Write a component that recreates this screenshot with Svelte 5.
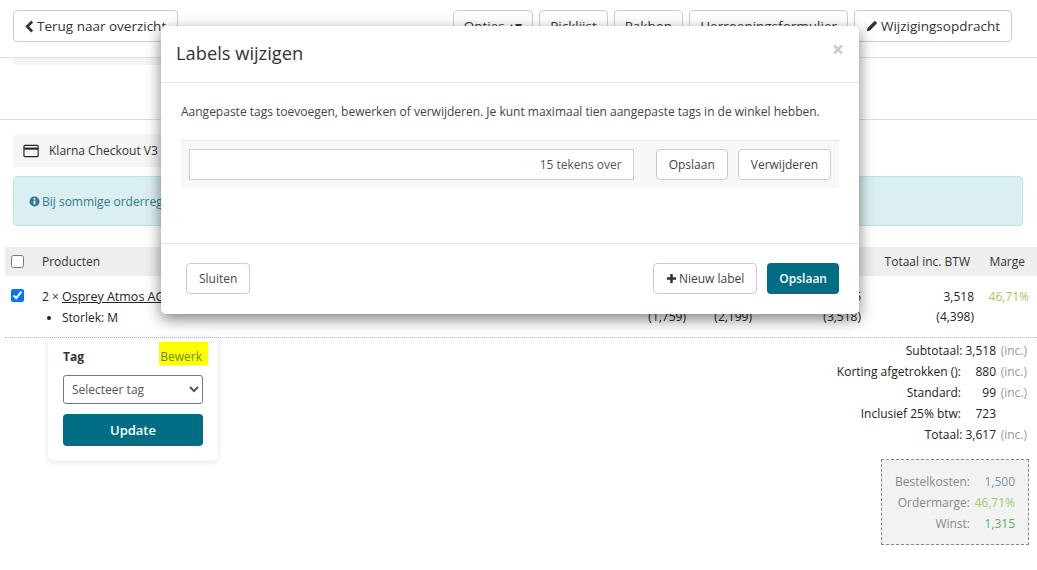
<script>
  const topButtons = ['Opties ▴▾', 'Picklijst', 'Pakbon', 'Herroepingsformulier'];
  const totals = [
    { label: 'Subtotaal:', value: '3,518', inc: true, tight: true },
    { label: 'Korting afgetrokken ():', value: '880', inc: true },
    { label: 'Standard:', value: '99', inc: true },
    { label: 'Inclusief 25% btw:', value: '723', inc: false },
    { label: 'Totaal:', value: '3,617', inc: true, tight: true }
  ];
</script>

<div class="page">
  <header class="topbar">
    <button class="btn">
      <svg class="chev" viewBox="0 0 10 14" width="9" height="13"><path d="M8 1.5 2.5 7 8 12.5" fill="none" stroke="currentColor" stroke-width="3"/></svg>
      Terug naar overzicht
    </button>
    <div class="top-actions">
      {#each topButtons as label}
        <button class="btn plain">{label}</button>
      {/each}
      <button class="btn">
        <svg viewBox="0 0 14 14" width="12" height="12"><path d="M1 13l.8-3.6L9.6 1.6a1 1 0 0 1 1.4 0l1.4 1.4a1 1 0 0 1 0 1.4L4.6 12.2z" fill="#333"/></svg>
        Wijzigingsopdracht
      </button>
    </div>
  </header>

  <div class="strip-wrap"><div class="strip"></div></div>

  <section class="payment-section">
    <div class="payment">
      <svg viewBox="0 0 18 14" width="17" height="14"><rect x="1" y="1" width="15" height="12" rx="1" fill="none" stroke="#222" stroke-width="1.2"/><rect x="1" y="3.4" width="15" height="2.2" fill="#222"/></svg>
      <span>Klarna Checkout V3</span>
    </div>
    <div class="alert">
      <svg viewBox="0 0 12 12" width="11" height="11"><circle cx="6" cy="6" r="5.5" fill="#2f7a8c"/><rect x="5" y="5" width="2" height="4.2" fill="#dbeff2"/><rect x="5" y="2.4" width="2" height="1.7" fill="#dbeff2"/></svg>
      Bij sommige orderregels is iets gewijzigd
    </div>
  </section>

  <div class="table">
    <div class="row head">
      <input type="checkbox" />
      <span class="product">Producten</span>
      <span></span><span></span><span></span>
      <span class="num">Totaal inc. BTW</span>
      <span class="num">Marge</span>
    </div>
    <div class="row item">
      <input type="checkbox" checked />
      <div class="product">
        <div>2 × <a href="#top">Osprey Atmos AG 65</a></div>
        <ul><li>Storlek: M</li></ul>
      </div>
      <div class="num">1,407<br />(1,759)</div>
      <div class="num">1,759<br />(2,199)</div>
      <div class="num">2,815<br />(3,518)</div>
      <div class="num">3,518<br />(4,398)</div>
      <div class="num margin">46,71%</div>
    </div>
  </div>

  <div class="lower">
    <aside class="tag-card">
      <div class="tag-head">
        <strong>Tag</strong>
        <mark>Bewerk</mark>
      </div>
      <select class="tag-select">
        <option>Selecteer tag</option>
      </select>
      <button class="btn-primary update">Update</button>
    </aside>

    <div class="summary">
      <div class="totals">
        {#each totals as t}
          <div class="total-row">
            {#if t.tight}
              <span class="total-label">{t.label} {t.value}</span>
            {:else}
              <span class="total-label">{t.label}</span>
              <span class="total-value">{t.value}</span>
            {/if}
            <span class="inc">{t.inc ? '(inc.)' : ''}</span>
          </div>
        {/each}
      </div>
      <div class="profit">
        <div class="profit-row"><span>Bestelkosten:</span><b class="blue">1,500</b></div>
        <div class="profit-row"><span>Ordermarge:</span><b class="lime">46,71%</b></div>
        <div class="profit-row"><span>Winst:</span><b class="green">1,315</b></div>
      </div>
    </div>
  </div>

  <div class="modal">
    <div class="modal-head">
      <h2>Labels wijzigen</h2>
      <span class="close">×</span>
    </div>
    <div class="modal-body">
      <p>Aangepaste tags toevoegen, bewerken of verwijderen. Je kunt maximaal tien aangepaste tags in de winkel hebben.</p>
      <div class="label-row">
        <div class="label-input">15 tekens over</div>
        <button class="btn">Opslaan</button>
        <button class="btn">Verwijderen</button>
      </div>
    </div>
    <div class="modal-foot">
      <button class="btn">Sluiten</button>
      <div class="foot-right">
        <button class="btn new-label">
          <svg viewBox="0 0 12 12" width="11" height="11"><path d="M6 1v10M1 6h10" stroke="#333" stroke-width="2.8"/></svg>
          Nieuw label
        </button>
        <button class="btn-primary">Opslaan</button>
      </div>
    </div>
  </div>
</div>

<style>
  :global(body) {
    margin: 0;
    background: #fff;
  }

  .page {
    position: relative;
    width: 1037px;
    height: 570px;
    overflow: hidden;
    font-family: 'Open Sans', sans-serif;
    font-size: 12px;
    color: #333;
  }

  button {
    font-family: inherit;
  }

  .btn {
    display: inline-flex;
    align-items: center;
    justify-content: center;
    gap: 3px;
    height: 32px;
    padding: 0 11px;
    background: #fff;
    border: 1px solid #ccc;
    border-radius: 4px;
    font-size: 13.5px;
    color: #333;
    white-space: nowrap;
  }

  .btn.plain {
    padding: 0 10px;
  }

  .btn-primary {
    height: 31px;
    padding: 0 12px;
    background: #006d85;
    border: 0;
    border-radius: 4px;
    color: #fff;
    font-size: 12px;
    font-weight: 600;
  }

  .topbar {
    display: flex;
    justify-content: space-between;
    height: 47px;
    padding: 10px 25px 0 13px;
    border-bottom: 1px solid #ddd;
  }

  .top-actions {
    display: flex;
    gap: 6px;
  }

  .strip-wrap {
    height: 61px;
    padding: 0 13px;
    border-bottom: 1px solid #ddd;
  }

  .strip {
    width: 300px;
    height: 7px;
    background: #f5f5f5;
    border-radius: 0 0 4px 4px;
  }

  .payment-section {
    display: flex;
    flex-direction: column;
    gap: 9px;
    padding: 14px 14px 0 13px;
  }

  .payment {
    display: flex;
    align-items: center;
    gap: 9px;
    height: 33px;
    padding-left: 10px;
    width: 400px;
    background: #f5f5f5;
    border-radius: 3px;
  }

  .alert {
    display: flex;
    align-items: center;
    gap: 2px;
    height: 48px;
    padding-left: 15px;
    background: #dbeff2;
    border: 1px solid #b9e6ec;
    border-radius: 4px;
    color: #2f7a8c;
  }

  .table {
    margin-top: 21px;
    padding-left: 5px;
  }

  .row {
    display: grid;
    grid-template-columns: 37px 570px 74px 66px 109px 113px 55px;
    align-items: start;
  }

  .head {
    height: 29px;
    align-items: center;
    background: #eee;
    color: #333;
  }

  .head .num {
    padding-right: 4px;
  }

  .item {
    height: 62px;
    padding-top: 11px;
    box-sizing: border-box;
    border-bottom: 1px dotted #bbb;
    line-height: 20px;
    color: #222;
  }

  input[type='checkbox'] {
    width: 13px;
    height: 13px;
    margin: 0 0 0 6px;
  }

  .item input {
    margin-top: 2px;
  }

  .num {
    text-align: right;
    white-space: nowrap;
  }

  .margin {
    color: #9ccc65;
  }

  a {
    font-size: 12.5px;
    color: #222;
  }

  ul {
    margin: 1px 0 0;
    padding-left: 20px;
  }

  .lower {
    display: flex;
    justify-content: space-between;
    padding-left: 48px;
  }

  .tag-card {
    width: 140px;
    height: 122px;
    padding: 1px 15px 0;
    border-radius: 0 0 6px 6px;
    background: #fff;
    box-shadow: 0 1px 6px rgba(0, 0, 0, 0.12);
  }

  .tag-head {
    display: flex;
    justify-content: space-between;
    align-items: center;
    height: 34px;
    margin-bottom: 2px;
  }

  mark {
    margin: -6px -5px 0 0;
    padding: 6px 6px 0 1px;
    background: #ff0;
    color: #6d8a1e;
  }

  .tag-select {
    display: block;
    width: 140px;
    height: 29px;
    padding-left: 4px;
    background: #fff;
    border: 1px solid #777;
    border-radius: 3px;
    font-family: inherit;
    font-size: 12px;
    color: #555;
  }

  .update {
    display: block;
    width: 140px;
    height: 32px;
    margin-top: 10px;
    font-size: 13px;
  }

  .summary {
    display: flex;
    flex-direction: column;
    align-items: flex-end;
    padding-right: 8px;
  }

  .totals {
    padding: 2px 2px 0 0;
  }

  .total-row {
    display: flex;
    justify-content: flex-end;
    align-items: center;
    height: 21px;
    color: #222;
  }

  .total-value {
    width: 35px;
    text-align: right;
  }

  .inc {
    width: 31px;
    text-align: right;
    color: #999;
  }

  .profit {
    box-sizing: border-box;
    width: 148px;
    height: 86px;
    margin-top: 14px;
    padding: 11px 14px 0 0;
    background: #f2f2f2;
    border: 1px dashed #888;
    color: #888;
  }

  .profit-row {
    display: grid;
    grid-template-columns: 88px 45px;
    height: 21px;
    align-items: center;
    text-align: right;
  }

  .profit-row b {
    font-weight: 400;
  }

  .blue {
    color: #7a93a8;
  }

  .lime {
    color: #9ccc65;
  }

  .green {
    color: #5cb06a;
  }

  /* dialog sits over the page */
  .modal {
    position: absolute;
    left: 161px;
    top: 26px;
    width: 698px;
    height: 288px;
    display: flex;
    flex-direction: column;
    background: #fff;
    border-radius: 5px;
    box-shadow: 0 5px 15px rgba(0, 0, 0, 0.5);
  }

  .modal-head {
    display: flex;
    justify-content: space-between;
    align-items: center;
    height: 52px;
    padding: 0 15px 4px;
    border-bottom: 1px solid #e5e5e5;
  }

  h2 {
    margin: 0;
    font-size: 18.3px;
    font-weight: 400;
    color: #333;
  }

  .close {
    margin-top: -6px;
    font-size: 21px;
    font-weight: 700;
    color: #c8c8c8;
  }

  .modal-body {
    flex: 1;
    padding: 0 20px;
  }

  p {
    margin: 20px 0 0;
    line-height: 18px;
    color: #444;
  }

  .label-row {
    display: flex;
    align-items: center;
    gap: 10px;
    height: 47px;
    margin-top: 19px;
    padding: 0 8px;
    background: #f8f8f8;
    border-top: 1px solid #e5e5e5;
  }

  .label-input {
    flex: 1;
    box-sizing: border-box;
    height: 31px;
    line-height: 29px;
    margin-right: 12px;
    padding-right: 11px;
    background: #fff;
    border: 1px solid #ccc;
    text-align: right;
    color: #555;
  }

  .label-row .btn,
  .modal-foot .btn {
    height: 31px;
    font-size: 12px;
    padding: 0 12px;
    color: #444;
  }

  .modal-foot .new-label {
    gap: 2px;
  }

  .modal-foot {
    display: flex;
    justify-content: space-between;
    align-items: center;
    height: 71px;
    padding: 0 20px 1px 25px;
    box-sizing: border-box;
    border-top: 1px solid #e5e5e5;
  }

  .foot-right {
    display: flex;
    gap: 10px;
  }
</style>
